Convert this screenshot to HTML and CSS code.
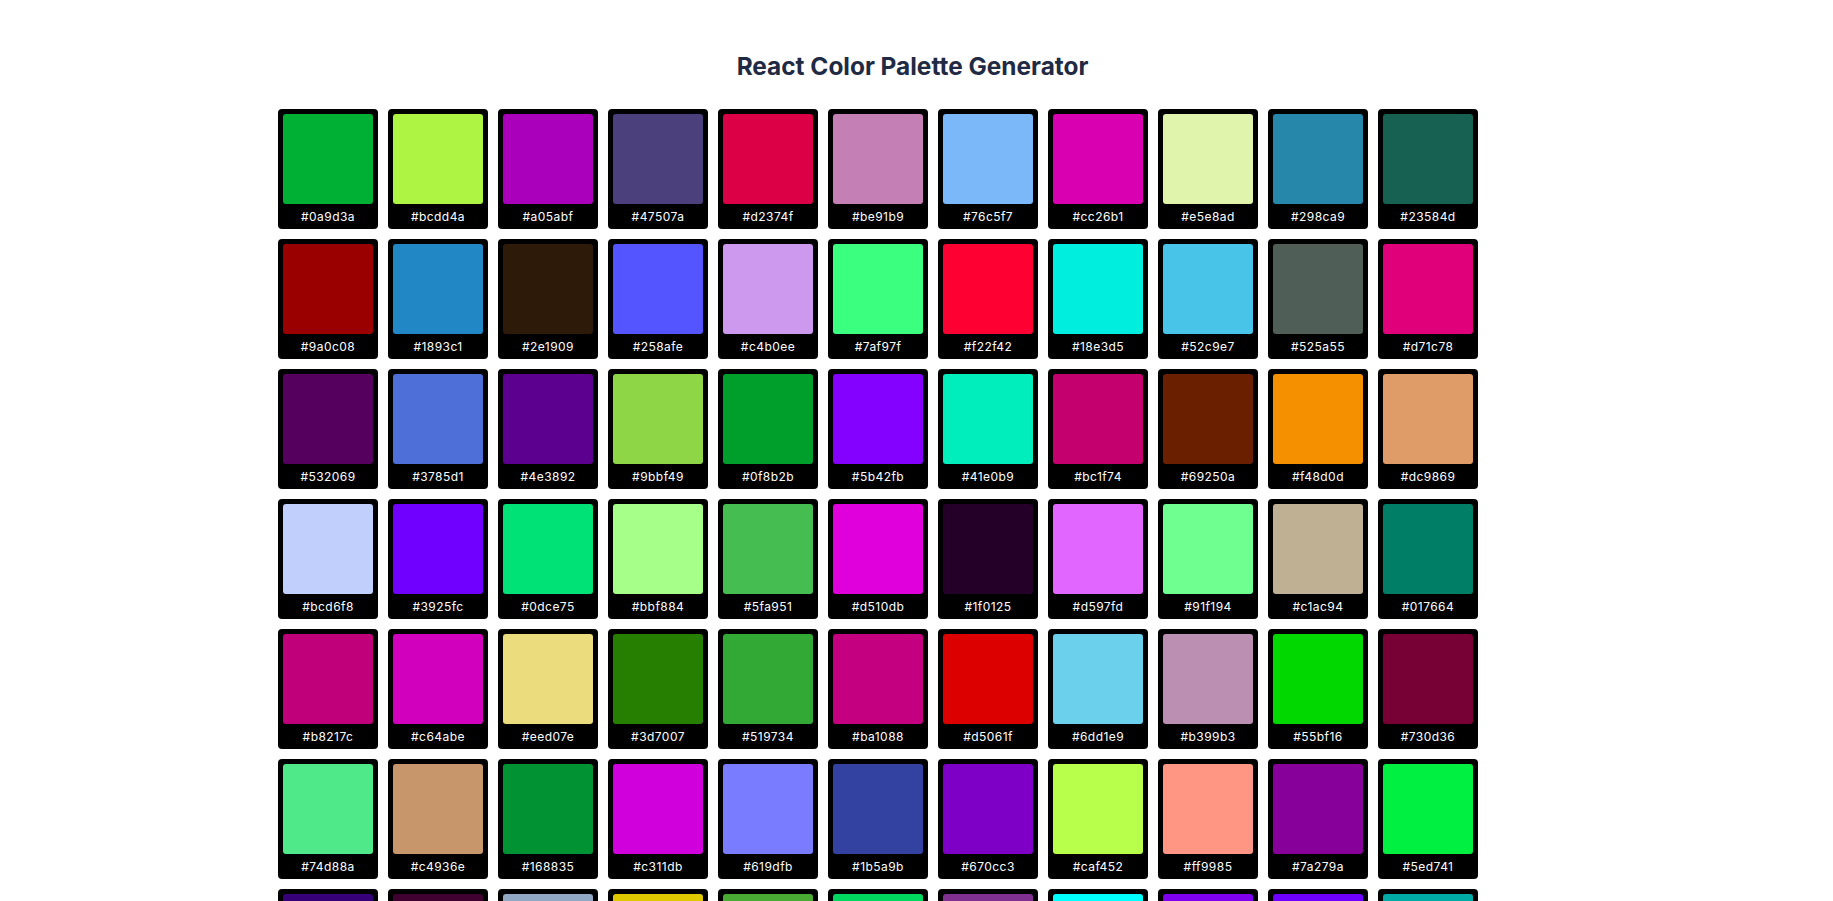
FILE: index.html
```html
<!DOCTYPE html>
<html lang="en">
<head>
<meta charset="utf-8">
<title>React Color Palette Generator</title>
<link rel="stylesheet" href="styles.css">
</head>
<body>
<div class="app">
  <h1 class="title">React Color Palette Generator</h1>
  <div class="palette">
    <div class="card"><div class="swatch" style="background:#00b035"></div><div class="label">#0a9d3a</div></div>
    <div class="card"><div class="swatch" style="background:#adf542"></div><div class="label">#bcdd4a</div></div>
    <div class="card"><div class="swatch" style="background:#aa00bb"></div><div class="label">#a05abf</div></div>
    <div class="card"><div class="swatch" style="background:#4b3f7c"></div><div class="label">#47507a</div></div>
    <div class="card"><div class="swatch" style="background:#dc0046"></div><div class="label">#d2374f</div></div>
    <div class="card"><div class="swatch" style="background:#c47fb5"></div><div class="label">#be91b9</div></div>
    <div class="card"><div class="swatch" style="background:#7bb8fa"></div><div class="label">#76c5f7</div></div>
    <div class="card"><div class="swatch" style="background:#d800b0"></div><div class="label">#cc26b1</div></div>
    <div class="card"><div class="swatch" style="background:#e0f5ab"></div><div class="label">#e5e8ad</div></div>
    <div class="card"><div class="swatch" style="background:#2687ab"></div><div class="label">#298ca9</div></div>
    <div class="card"><div class="swatch" style="background:#166152"></div><div class="label">#23584d</div></div>

    <div class="card"><div class="swatch" style="background:#9a0000"></div><div class="label">#9a0c08</div></div>
    <div class="card"><div class="swatch" style="background:#2288c5"></div><div class="label">#1893c1</div></div>
    <div class="card"><div class="swatch" style="background:#2e1a08"></div><div class="label">#2e1909</div></div>
    <div class="card"><div class="swatch" style="background:#5555ff"></div><div class="label">#258afe</div></div>
    <div class="card"><div class="swatch" style="background:#cc99ee"></div><div class="label">#c4b0ee</div></div>
    <div class="card"><div class="swatch" style="background:#3aff7f"></div><div class="label">#7af97f</div></div>
    <div class="card"><div class="swatch" style="background:#ff0033"></div><div class="label">#f22f42</div></div>
    <div class="card"><div class="swatch" style="background:#00eedd"></div><div class="label">#18e3d5</div></div>
    <div class="card"><div class="swatch" style="background:#48c4e8"></div><div class="label">#52c9e7</div></div>
    <div class="card"><div class="swatch" style="background:#4f5f57"></div><div class="label">#525a55</div></div>
    <div class="card"><div class="swatch" style="background:#e00079"></div><div class="label">#d71c78</div></div>

    <div class="card"><div class="swatch" style="background:#55005f"></div><div class="label">#532069</div></div>
    <div class="card"><div class="swatch" style="background:#4e6ed8"></div><div class="label">#3785d1</div></div>
    <div class="card"><div class="swatch" style="background:#5c0090"></div><div class="label">#4e3892</div></div>
    <div class="card"><div class="swatch" style="background:#8ed646"></div><div class="label">#9bbf49</div></div>
    <div class="card"><div class="swatch" style="background:#009e2b"></div><div class="label">#0f8b2b</div></div>
    <div class="card"><div class="swatch" style="background:#8400ff"></div><div class="label">#5b42fb</div></div>
    <div class="card"><div class="swatch" style="background:#00eebb"></div><div class="label">#41e0b9</div></div>
    <div class="card"><div class="swatch" style="background:#c4006e"></div><div class="label">#bc1f74</div></div>
    <div class="card"><div class="swatch" style="background:#6a2000"></div><div class="label">#69250a</div></div>
    <div class="card"><div class="swatch" style="background:#f59100"></div><div class="label">#f48d0d</div></div>
    <div class="card"><div class="swatch" style="background:#df9c68"></div><div class="label">#dc9869</div></div>

    <div class="card"><div class="swatch" style="background:#c0cffb"></div><div class="label">#bcd6f8</div></div>
    <div class="card"><div class="swatch" style="background:#7000ff"></div><div class="label">#3925fc</div></div>
    <div class="card"><div class="swatch" style="background:#00e176"></div><div class="label">#0dce75</div></div>
    <div class="card"><div class="swatch" style="background:#a6ff88"></div><div class="label">#bbf884</div></div>
    <div class="card"><div class="swatch" style="background:#45bd50"></div><div class="label">#5fa951</div></div>
    <div class="card"><div class="swatch" style="background:#e000dc"></div><div class="label">#d510db</div></div>
    <div class="card"><div class="swatch" style="background:#240029"></div><div class="label">#1f0125</div></div>
    <div class="card"><div class="swatch" style="background:#e066ff"></div><div class="label">#d597fd</div></div>
    <div class="card"><div class="swatch" style="background:#6fff90"></div><div class="label">#91f194</div></div>
    <div class="card"><div class="swatch" style="background:#bfb093"></div><div class="label">#c1ac94</div></div>
    <div class="card"><div class="swatch" style="background:#007e66"></div><div class="label">#017664</div></div>

    <div class="card"><div class="swatch" style="background:#c0007a"></div><div class="label">#b8217c</div></div>
    <div class="card"><div class="swatch" style="background:#d000bc"></div><div class="label">#c64abe</div></div>
    <div class="card"><div class="swatch" style="background:#ebdd7d"></div><div class="label">#eed07e</div></div>
    <div class="card"><div class="swatch" style="background:#267f00"></div><div class="label">#3d7007</div></div>
    <div class="card"><div class="swatch" style="background:#32a934"></div><div class="label">#519734</div></div>
    <div class="card"><div class="swatch" style="background:#c40080"></div><div class="label">#ba1088</div></div>
    <div class="card"><div class="swatch" style="background:#dc0000"></div><div class="label">#d5061f</div></div>
    <div class="card"><div class="swatch" style="background:#6ad0ec"></div><div class="label">#6dd1e9</div></div>
    <div class="card"><div class="swatch" style="background:#bb8fb2"></div><div class="label">#b399b3</div></div>
    <div class="card"><div class="swatch" style="background:#00d800"></div><div class="label">#55bf16</div></div>
    <div class="card"><div class="swatch" style="background:#770035"></div><div class="label">#730d36</div></div>

    <div class="card"><div class="swatch" style="background:#50e98a"></div><div class="label">#74d88a</div></div>
    <div class="card"><div class="swatch" style="background:#c7966a"></div><div class="label">#c4936e</div></div>
    <div class="card"><div class="swatch" style="background:#009233"></div><div class="label">#168835</div></div>
    <div class="card"><div class="swatch" style="background:#d000dd"></div><div class="label">#c311db</div></div>
    <div class="card"><div class="swatch" style="background:#7a7cff"></div><div class="label">#619dfb</div></div>
    <div class="card"><div class="swatch" style="background:#3342a1"></div><div class="label">#1b5a9b</div></div>
    <div class="card"><div class="swatch" style="background:#7e00c7"></div><div class="label">#670cc3</div></div>
    <div class="card"><div class="swatch" style="background:#b7ff4a"></div><div class="label">#caf452</div></div>
    <div class="card"><div class="swatch" style="background:#ff9582"></div><div class="label">#ff9985</div></div>
    <div class="card"><div class="swatch" style="background:#860099"></div><div class="label">#7a279a</div></div>
    <div class="card"><div class="swatch" style="background:#00f042"></div><div class="label">#5ed741</div></div>

    <div class="card"><div class="swatch" style="background:#360078"></div><div class="label">#3a1a78</div></div>
    <div class="card"><div class="swatch" style="background:#400030"></div><div class="label">#3e0d30</div></div>
    <div class="card"><div class="swatch" style="background:#90a8c3"></div><div class="label">#93a8c0</div></div>
    <div class="card"><div class="swatch" style="background:#e0c800"></div><div class="label">#d8c21a</div></div>
    <div class="card"><div class="swatch" style="background:#4aab34"></div><div class="label">#55a23c</div></div>
    <div class="card"><div class="swatch" style="background:#00d860"></div><div class="label">#1ecb67</div></div>
    <div class="card"><div class="swatch" style="background:#7f3090"></div><div class="label">#7b3a8e</div></div>
    <div class="card"><div class="swatch" style="background:#00ffff"></div><div class="label">#2bf2f0</div></div>
    <div class="card"><div class="swatch" style="background:#7f00ef"></div><div class="label">#7a1de6</div></div>
    <div class="card"><div class="swatch" style="background:#6f00ff"></div><div class="label">#6a19f4</div></div>
    <div class="card"><div class="swatch" style="background:#00aaa5"></div><div class="label">#12a29e</div></div>
  </div>
</div>
</body>
</html>
```
FILE: styles.css
```css
html, body {
  margin: 0;
  padding: 0;
  background: #ffffff;
}

body {
  font-family: Inter, "Noto Sans", "Liberation Sans", sans-serif;
}

.app {
  padding-top: 51px;
}

.title {
  margin: 0;
  padding-right: 8px;
  text-align: center;
  font-size: 24.4px;
  line-height: 30px;
  font-weight: 700;
  color: #1f2a44;
}

.palette {
  max-width: 1277px;
  margin: 28px auto 0;
  display: flex;
  flex-wrap: wrap;
  gap: 10px;
  padding-bottom: 40px;
}

.card {
  width: 100px;
  box-sizing: border-box;
  padding: 5px 5px 1px;
  background: #000000;
  border-radius: 4px;
  display: flex;
  flex-direction: column;
}

.swatch {
  width: 90px;
  height: 90px;
  border-radius: 3px;
}

.label {
  height: 24px;
  line-height: 25px;
  text-align: center;
  color: #ffffff;
  font-size: 12px;
  letter-spacing: 0.45px;
}
```
